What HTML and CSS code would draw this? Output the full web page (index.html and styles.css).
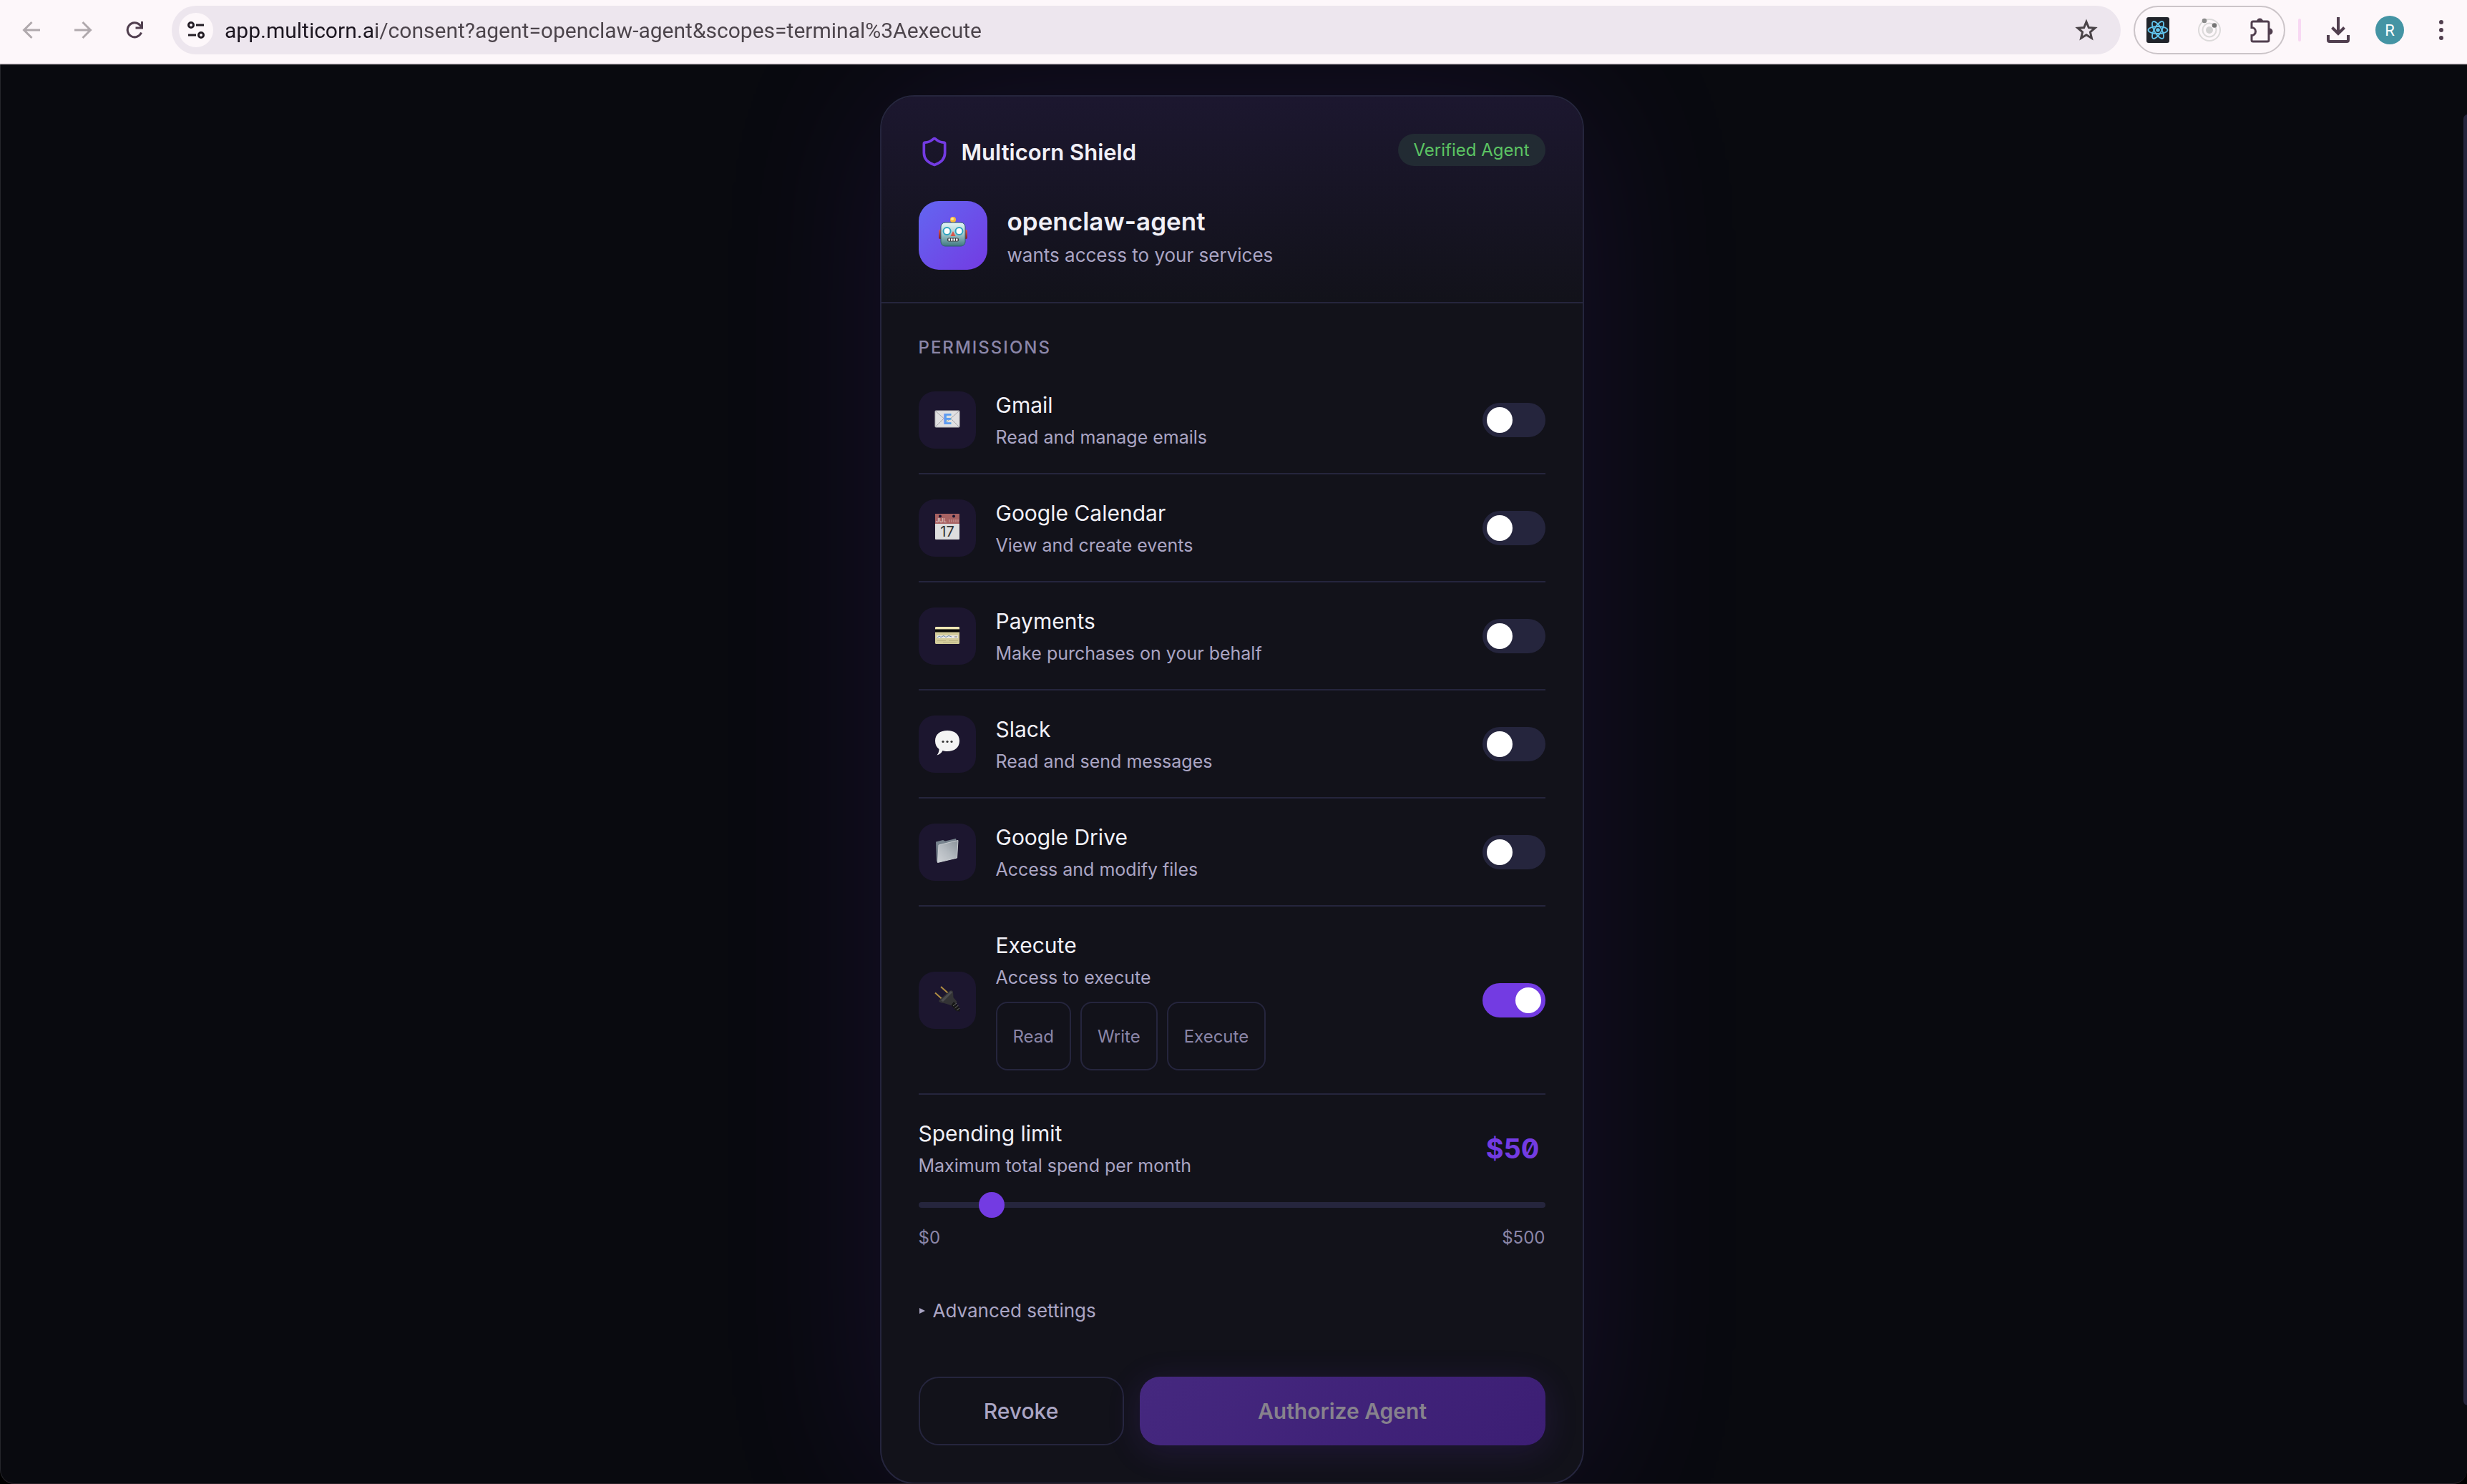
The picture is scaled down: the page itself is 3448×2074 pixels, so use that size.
FILE: index.html
```html
<!DOCTYPE html>
<html lang="en">
<head>
    <meta charset="UTF-8">
    <meta name="viewport" content="width=device-width, initial-scale=1.0">
    <title>Multicorn Shield</title>
    <link rel="stylesheet" href="styles.css">
</head>
<body>
    <header class="toolbar">
        <button class="tool-btn disabled" type="button" aria-label="Back">
            <svg width="26" height="26" viewBox="0 0 26 26" fill="none" stroke="currentColor" stroke-width="3"><path d="M25 13H3M13.5 2L2.5 13l11 11"/></svg>
        </button>
        <button class="tool-btn disabled" type="button" aria-label="Forward">
            <svg width="26" height="26" viewBox="0 0 26 26" fill="none" stroke="currentColor" stroke-width="3"><path d="M1 13h22M12.5 2l11 11-11 11"/></svg>
        </button>
        <button class="tool-btn" type="button" aria-label="Reload">
            <svg width="26" height="26" viewBox="0 0 26 26" fill="none" stroke="currentColor" stroke-width="3"><path d="M22.5 16.5A10 10 0 1 1 20.5 6l3 3.5"/><path d="M23.5 1v9h-9"/></svg>
        </button>
        <div class="address">
            <button class="site-info" type="button" aria-label="Site information">
                <svg width="28" height="28" viewBox="0 0 28 28" fill="none" stroke="currentColor" stroke-width="3"><circle cx="7" cy="7" r="3.5"/><path d="M14 7h11M3 21h11"/><circle cx="21" cy="21" r="3.5"/></svg>
            </button>
            <input class="url" type="text" aria-label="Address" value="app.multicorn.ai/consent?agent=openclaw-agent&amp;scopes=terminal%3Aexecute">
            <button class="star" type="button" aria-label="Bookmark this page">
                <svg width="32" height="32" viewBox="0 0 32 32" fill="none" stroke="currentColor" stroke-width="3"><path d="M16 4.5l3.3 8 8.7.7-6.6 5.7 2 8.4L16 22.8l-7.4 4.500 2-8.400L4 13.2l8.700-.7z"/></svg>
            </button>
        </div>
        <div class="extensions">
            <button type="button" aria-label="React Developer Tools">
                <svg width="32" height="36" viewBox="0 0 32 36"><rect width="32" height="36" rx="3" fill="#20232a"/><g fill="none" stroke="#61c3ec" stroke-width="1.8"><ellipse cx="16" cy="18" rx="13.5" ry="5"/><ellipse cx="16" cy="18" rx="13.5" ry="5" transform="rotate(60 16 18)"/><ellipse cx="16" cy="18" rx="13.5" ry="5" transform="rotate(120 16 18)"/></g><circle cx="16" cy="18" r="2.8" fill="#61c3ec"/></svg>
            </button>
            <button type="button" aria-label="Orbit extension">
                <svg width="32" height="36" viewBox="0 0 32 36"><g fill="none" stroke="#dcdada" stroke-width="2"><circle cx="16" cy="18" r="15"/><circle cx="16" cy="18" r="9.5"/></g><circle cx="16" cy="18" r="5" fill="#d3d2d2"/><circle cx="9" cy="5" r="3.3" fill="#8b8b8b"/><circle cx="23" cy="11.5" r="3.3" fill="#757575"/></svg>
            </button>
            <button type="button" aria-label="Extensions">
                <svg width="34" height="36" viewBox="0 0 34 36"><path d="M5 6h20a2 2 0 0 1 2 2v24a2 2 0 0 1-2 2H5a2 2 0 0 1-2-2v-6.5a5.5 5.5 0 0 0 0-11V8a2 2 0 0 1 2-2z" fill="none" stroke="#513f4f" stroke-width="3"/><path d="M10 6a4.500 4.500 0 0 1 9 0zM28 15.5a4.500 4.500 0 0 1 0 9z" fill="#513f4f"/></svg>
            </button>
        </div>
        <span class="divider"></span>
        <button class="tool-btn" type="button" aria-label="Downloads">
            <svg width="32" height="36" viewBox="0 0 32 36" fill="none" stroke="currentColor" stroke-width="4"><path d="M16 0v23M7.5 14.5L16 23l8.5-8.5M2 25v7a2 2 0 0 0 2 2h24a2 2 0 0 0 2-2v-7"/></svg>
        </button>
        <button class="profile" type="button" aria-label="Profile">R</button>
        <button class="tool-btn" type="button" aria-label="Menu">
            <svg width="8" height="30" viewBox="0 0 8 30" fill="currentColor"><circle cx="4" cy="4" r="3"/><circle cx="4" cy="15" r="3"/><circle cx="4" cy="26" r="3"/></svg>
        </button>
    </header>

    <main class="page">
        <form class="card">
            <div class="card-header">
                <div class="brand-row">
                    <div class="brand">
                        <svg width="44" height="44" viewBox="0 0 24 24" fill="none" stroke="#733be2" stroke-width="2" stroke-linecap="round" stroke-linejoin="round"><path d="M20 13c0 5-3.5 7.5-7.66 8.95a1 1 0 0 1-.67-.01C7.5 20.5 4 18 4 13V6a1 1 0 0 1 1-1c2 0 4.5-1.2 6.24-2.72a1.17 1.17 0 0 1 1.52 0C14.51 3.81 17 5 19 5a1 1 0 0 1 1 1z"/></svg>
                        <h1>Multicorn Shield</h1>
                    </div>
                    <span class="badge">Verified Agent</span>
                </div>
                <div class="agent">
                    <div class="avatar">
                        <svg width="40" height="44" viewBox="0 0 40 44">
                            <defs>
                                <linearGradient id="face" x1="0" y1="0" x2="0" y2="1"><stop offset="0" stop-color="#e4f6f6"/><stop offset=".45" stop-color="#a9cdd1"/><stop offset="1" stop-color="#3e7880"/></linearGradient>
                                <linearGradient id="ear" x1="0" y1="0" x2="0" y2="1"><stop offset="0" stop-color="#e25548"/><stop offset="1" stop-color="#7e1d26"/></linearGradient>
                            </defs>
                            <rect x="0" y="19" width="5" height="13" rx="2" fill="url(#ear)"/>
                            <rect x="35" y="19" width="5" height="13" rx="2" fill="url(#ear)"/>
                            <path d="M14 10q6-5 12 0z" fill="#63508c"/>
                            <circle cx="20" cy="5" r="4" fill="#f7b83c"/>
                            <circle cx="19" cy="4" r="2" fill="#ffe48e"/>
                            <rect x="3" y="9" width="34" height="33" rx="6" fill="url(#face)" stroke="#2f616c"/>
                            <circle cx="11.5" cy="21" r="5" fill="#fff" stroke="#2ea3bf" stroke-width="2"/>
                            <circle cx="28.5" cy="21" r="5" fill="#fff" stroke="#2ea3bf" stroke-width="2"/>
                            <path d="M20 21l3.500 7h-7z" fill="#d9554a"/>
                            <rect x="12" y="30.5" width="16" height="5" rx="2" fill="#3a3a3e"/>
                            <path d="M13.5 33h13" stroke="#fff" stroke-width="3" stroke-dasharray="2.5 1"/>
                        </svg>
                    </div>
                    <div>
                        <h2>openclaw-agent</h2>
                        <p>wants access to your services</p>
                    </div>
                </div>
            </div>

            <div class="card-body">
                <h3 class="section-title">Permissions</h3>
                <ul class="permissions">
                    <li class="permission">
                        <span class="tile">
                            <svg width="36" height="36" viewBox="0 0 36 36"><rect x="1" y="7" width="34" height="23" rx="1" fill="#e0e0e1" stroke="#b9b9bb"/><path d="M1 7l17 15L35 7M1 30l12-12M35 30L23 18" fill="none" stroke="#a5a5a8"/><text class="glyph-mail" x="18" y="26" text-anchor="middle">E</text></svg>
                        </span>
                        <div class="info">
                            <label for="gmail">Gmail</label>
                            <p>Read and manage emails</p>
                        </div>
                        <input class="switch" type="checkbox" role="switch" id="gmail">
                    </li>
                    <li class="permission">
                        <span class="tile">
                            <svg width="36" height="36" viewBox="0 0 36 36"><rect x="1" y="0" width="34" height="36" rx="1" fill="#dedede"/><path d="M1 0h34v14H1z" fill="#a86262"/><circle cx="8" cy="3.5" r="2" fill="#1a1530"/><circle cx="27" cy="3.5" r="2" fill="#1a1530"/><path d="M20 10h14" stroke="#b98080" stroke-width="4" stroke-dasharray="2 1"/><text class="glyph-month" x="2" y="12">JUL</text><text class="glyph-day" x="18" y="32" text-anchor="middle">17</text></svg>
                        </span>
                        <div class="info">
                            <label for="calendar">Google Calendar</label>
                            <p>View and create events</p>
                        </div>
                        <input class="switch" type="checkbox" role="switch" id="calendar">
                    </li>
                    <li class="permission">
                        <span class="tile">
                            <svg width="36" height="36" viewBox="0 0 36 36"><rect x="1" y="7" width="34" height="24" rx="1.5" fill="#d3cc9b"/><path d="M1 8.5Q1 7 2.5 7h31Q35 7 35 8.5V10H1z" fill="#efe7b4"/><path d="M1 10.5h34v4H1z" fill="#0b0b0a"/><path d="M3 19h30v4H3z" fill="#e9e8e2"/><path d="M4 22l3-2 2 1.5 4-2 3 2 4-2 4 1.5" fill="none" stroke="#6c8ab0"/><path d="M28 21h4" stroke="#777"/><path d="M4 26.5h12M20 26.5h13M12 29h19" stroke="#bab384"/></svg>
                        </span>
                        <div class="info">
                            <label for="payments">Payments</label>
                            <p>Make purchases on your behalf</p>
                        </div>
                        <input class="switch" type="checkbox" role="switch" id="payments">
                    </li>
                    <li class="permission">
                        <span class="tile">
                            <svg width="36" height="36" viewBox="0 0 36 36"><path d="M18 1c10 0 17 5 17 14.5S28 30 18 30c-2.5 0-4.5-.2-6.5-1C10 32 7 34.5 3.5 35.5 5.5 33 6.5 30 6.5 27 3 24.5 1 20.5 1 15.5 1 6 8 1 18 1z" fill="#f4f4f4"/><circle cx="12" cy="16.5" r="1.6" fill="#333"/><circle cx="18" cy="16.5" r="1.6" fill="#333"/><circle cx="24" cy="16.5" r="1.6" fill="#333"/></svg>
                        </span>
                        <div class="info">
                            <label for="slack">Slack</label>
                            <p>Read and send messages</p>
                        </div>
                        <input class="switch" type="checkbox" role="switch" id="slack">
                    </li>
                    <li class="permission">
                        <span class="tile">
                            <svg width="36" height="36" viewBox="0 0 36 36"><defs><linearGradient id="folder" x1="1" y1="0" x2="0" y2="1"><stop offset="0" stop-color="#8a929a"/><stop offset=".5" stop-color="#b2b8be"/><stop offset="1" stop-color="#cfd2d6"/></linearGradient></defs><path d="M2 5.500L12 3l3 1.500L30 1l1 4L5 34l-2-1z" fill="#77838e"/><path d="M6 10l27-6.500-1.500 24.500L4.500 34.500z" fill="url(#folder)" stroke="#c8ccd0"/></svg>
                        </span>
                        <div class="info">
                            <label for="drive">Google Drive</label>
                            <p>Access and modify files</p>
                        </div>
                        <input class="switch" type="checkbox" role="switch" id="drive">
                    </li>
                    <li class="permission">
                        <span class="tile">
                            <svg width="36" height="36" viewBox="0 0 36 36"><path d="M1 9.5l10 9M9 1l10 9" stroke="#b08d42" stroke-width="2"/><path d="M21 7q4-2 5 1l.5 8 5 6-3.5 7-6.5-2.5-8-2.5q-9-1-7-4z" fill="#333335"/><path d="M9 20L23 7l2 2-13 13z" fill="#4c4c4f"/><path d="M27 22l8.5 9v4.500l-5-.5-7-8z" fill="#161616"/><path d="M26 28l5-4M28.5 31l5-4M31 34l4-3" stroke="#6a6a6a"/></svg>
                        </span>
                        <div class="info">
                            <label for="execute">Execute</label>
                            <p>Access to execute</p>
                            <div class="chips">
                                <button class="chip" type="button">Read</button>
                                <button class="chip" type="button">Write</button>
                                <button class="chip" type="button">Execute</button>
                            </div>
                        </div>
                        <input class="switch" type="checkbox" role="switch" id="execute" checked>
                    </li>
                </ul>

                <div class="spending">
                    <div class="spending-row">
                        <div class="info">
                            <label for="limit">Spending limit</label>
                            <p>Maximum total spend per month</p>
                        </div>
                        <output class="amount" id="amount" for="limit">$50</output>
                    </div>
                    <input class="slider" type="range" id="limit" min="0" max="500" value="50">
                    <div class="range-labels">
                        <span>$0</span>
                        <span>$500</span>
                    </div>
                </div>

                <details class="advanced">
                    <summary><svg width="10" height="10" viewBox="0 0 10 10" fill="currentColor"><path d="M1 1l8 4-8 4z"/></svg>Advanced settings</summary>
                </details>

                <div class="actions">
                    <button class="btn revoke" type="button">Revoke</button>
                    <button class="btn authorize" type="submit" disabled>Authorize Agent</button>
                </div>
            </div>
        </form>
        <span class="scroll-thumb"></span>
    </main>

    <script>
        document.getElementById('limit').addEventListener('input', function(e) {
            document.getElementById('amount').textContent = '$' + e.target.value;
        });
    </script>
</body>
</html>
```
FILE: styles.css
```css
* {
    box-sizing: border-box;
}
html {
    background: #000;
}
body {
    margin: 0;
    height: 100vh;
    display: flex;
    flex-direction: column;
    overflow: hidden;
    font-family: Inter, sans-serif;
    color: #f1f0f7;
}
h1, h2, h3, p, ul {
    margin: 0;
    padding: 0;
}
button {
    font-family: inherit;
    padding: 0;
    border: none;
    background: none;
    color: inherit;
    cursor: pointer;
}
svg {
    display: block;
}

/* Browser toolbar */
.toolbar {
    display: flex;
    align-items: center;
    height: 90px;
    padding: 0 12px 4px 20px;
    background: #fdf7fa;
    border-bottom: 2px solid #ebe2e7;
    color: #513f4f;
}
.tool-btn {
    width: 48px;
    height: 48px;
    display: flex;
    align-items: center;
    justify-content: center;
}
.tool-btn + .tool-btn {
    margin-left: 24px;
}
.disabled {
    color: #b0a9ad;
}
.address {
    flex: 1;
    display: flex;
    align-items: center;
    height: 68px;
    margin: 0 18px 0 28px;
    padding: 0 32px 0 10px;
    border-radius: 34px;
    background: #ede6ee;
}
.site-info {
    width: 48px;
    height: 48px;
    border-radius: 50%;
    background: #fdf7fa;
    color: #231c24;
    display: flex;
    align-items: center;
    justify-content: center;
}
.url {
    flex: 1;
    margin-left: 16px;
    padding: 0;
    border: none;
    outline: none;
    font-family: Roboto, sans-serif;
    font-size: 30px;
    color: #4c444b;
    /* the host name is darker than the rest of the address */
    background: linear-gradient(to right, #1c1620 212px, #4c444b 212px);
    -webkit-background-clip: text;
    background-clip: text;
    -webkit-text-fill-color: transparent;
}
.star {
    color: #4a4448;
}
.extensions {
    display: flex;
    align-items: center;
    justify-content: space-between;
    width: 212px;
    height: 68px;
    padding: 0 14px 0 16px;
    border: 2px solid #cbc4c8;
    border-radius: 34px;
}
.divider {
    width: 4px;
    height: 32px;
    margin: 0 28px 0 18px;
    border-radius: 2px;
    background: #f8d8f3;
}
.profile {
    width: 40px;
    height: 40px;
    margin: 0 28px;
    border-radius: 50%;
    background: #4494a4;
    color: #fff;
    font-family: Roboto, sans-serif;
    font-size: 22px;
}

/* Page */
.page {
    position: relative;
    flex: 1;
    min-height: 0;
    overflow: hidden;
    padding: 43px 6px 0 0;
    background: #090a0f;
    border-left: 1px solid #25262b;
    border-bottom: 1px solid #2b2229;
    border-radius: 0 0 20px 20px;
}
.scroll-thumb {
    position: absolute;
    top: 70px;
    right: -7px;
    bottom: 109px;
    width: 12px;
    border-radius: 6px;
    background: #25253d;
}
.card {
    max-width: 984px;
    margin: 0 auto;
    border: 2px solid #25253d;
    border-radius: 48px;
    background: #12121a;
    box-shadow: 0 0 240px rgba(124, 58, 237, 0.12);
    overflow: hidden;
}
.card-header {
    padding: 52px 52px 45px;
    border-bottom: 2px solid #25253d;
    background: linear-gradient(180deg, #1c172f, #12121a);
}
.brand-row {
    display: flex;
    align-items: flex-start;
    justify-content: space-between;
    margin-bottom: 44px;
}
.brand {
    display: flex;
    align-items: center;
    gap: 16px;
    height: 50px;
}
.brand h1 {
    font-size: 31px;
    font-weight: 600;
}
.badge {
    padding: 0 22px;
    border-radius: 24px;
    background: #222b33;
    color: #5cc463;
    font-size: 24px;
    line-height: 45px;
}
.agent {
    display: flex;
    align-items: center;
    gap: 28px;
}
.avatar {
    width: 96px;
    height: 96px;
    padding-bottom: 10px;
    border-radius: 28px;
    background: linear-gradient(135deg, #6366f1, #733be2);
    display: flex;
    align-items: center;
    justify-content: center;
}
.agent h2 {
    font-size: 35px;
    font-weight: 600;
    line-height: 52px;
}
.agent p {
    margin-top: 4px;
    font-size: 26px;
    line-height: 36px;
    color: #aaa5c4;
}
.card-body {
    padding: 44px 52px 52px;
}
.section-title {
    margin-bottom: 8px;
    font-size: 24px;
    font-weight: 500;
    line-height: 36px;
    letter-spacing: 2px;
    text-transform: uppercase;
    color: #8b86a8;
}
.permissions {
    list-style: none;
}
.permission {
    display: flex;
    align-items: center;
    gap: 28px;
    padding: 32px 0;
    border-bottom: 2px solid #25253d;
}
.tile {
    width: 80px;
    height: 80px;
    padding-bottom: 4px;
    border-radius: 22px;
    background: #1c162f;
    display: flex;
    align-items: center;
    justify-content: center;
}
.glyph-mail {
    font-size: 20px;
    font-weight: 800;
    fill: #5c9cf0;
}
.glyph-month {
    font-size: 8px;
    fill: #e8dada;
}
.glyph-day {
    font-size: 20px;
    fill: #333;
}
.info {
    flex: 1;
}
.info label {
    display: block;
    font-size: 30px;
    line-height: 45px;
}
.info p {
    margin-top: 4px;
    font-size: 25px;
    line-height: 36px;
    color: #aaa5c4;
}
.switch {
    appearance: none;
    width: 88px;
    height: 48px;
    margin: 0;
    padding: 6px;
    border-radius: 24px;
    background: #25253d;
    cursor: pointer;
}
.switch::before {
    content: "";
    display: block;
    width: 36px;
    height: 36px;
    border-radius: 50%;
    background: #fff;
}
.switch:checked {
    background: #733be2;
}
.switch:checked::before {
    margin-left: auto;
}
.chips {
    display: flex;
    gap: 13px;
    margin-top: 16px;
}
.chip {
    height: 96px;
    padding: 0 22px;
    border: 2px solid #25253d;
    border-radius: 16px;
    font-size: 24px;
    color: #8b86a8;
}

/* Spending limit */
.spending {
    padding-top: 32px;
}
.spending-row {
    display: flex;
    align-items: center;
}
.amount {
    padding-right: 8px;
    font-size: 38px;
    font-weight: 700;
    font-feature-settings: "zero";
    color: #733be2;
}
.slider {
    appearance: none;
    display: block;
    width: 100%;
    height: 36px;
    margin: 19px 0 0;
    background: none;
}
.slider::-webkit-slider-runnable-track {
    height: 8px;
    border-radius: 4px;
    background: #25253d;
}
.slider::-webkit-slider-thumb {
    appearance: none;
    width: 36px;
    height: 36px;
    margin-top: -14px;
    border-radius: 50%;
    background: #733be2;
}
.range-labels {
    display: flex;
    justify-content: space-between;
    margin-top: 8px;
    font-size: 24px;
    line-height: 40px;
    color: #8b86a8;
}
.advanced {
    margin-top: 60px;
    font-size: 26px;
    line-height: 44px;
    color: #aaa5c4;
}
.advanced summary {
    display: flex;
    align-items: center;
    gap: 10px;
    cursor: pointer;
}
.actions {
    display: grid;
    grid-template-columns: 287px 1fr;
    gap: 22px;
    margin-top: 70px;
}
.btn {
    height: 96px;
    border-radius: 28px;
    font-size: 30px;
}
.revoke {
    border: 2px solid #25253d;
    font-weight: 500;
    color: #aaa5c4;
}
.authorize {
    background: linear-gradient(135deg, #45287f, #3c1e74);
    box-shadow: 0 8px 48px rgba(124, 58, 237, 0.15);
    font-weight: 600;
    color: #87828d;
}
```
